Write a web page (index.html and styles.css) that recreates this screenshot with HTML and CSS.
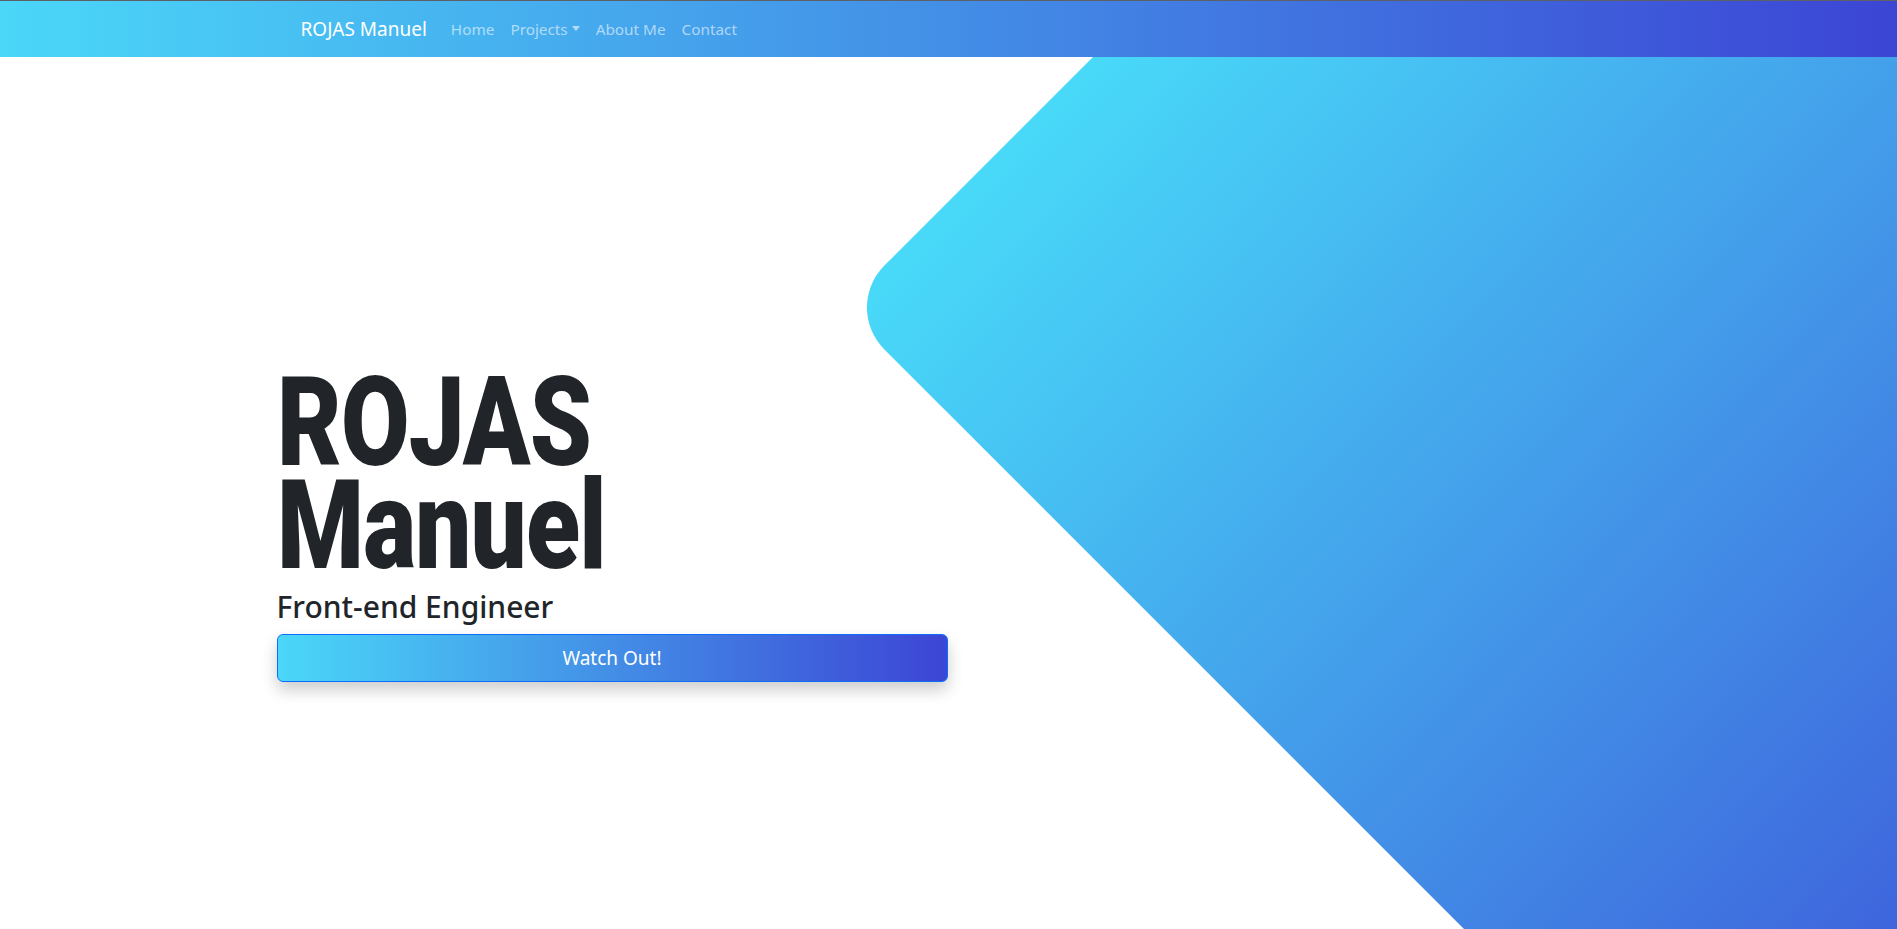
FILE: index.html
```html
<!DOCTYPE html>
<html lang="en">
<head>
<meta charset="utf-8">
<title>ROJAS Manuel</title>
<link rel="stylesheet" href="styles.css">
</head>
<body>
<nav class="navbar">
  <div class="nav-container">
    <a class="brand" href="#">ROJAS Manuel</a>
    <ul class="nav-links">
      <li><a class="nav-link" href="#">Home</a></li>
      <li><a class="nav-link dropdown" href="#">Projects</a></li>
      <li><a class="nav-link" href="#">About Me</a></li>
      <li><a class="nav-link" href="#">Contact</a></li>
    </ul>
  </div>
</nav>
<main class="hero">
  <svg class="hero-shape" viewBox="0 0 1897 872" preserveAspectRatio="none" aria-hidden="true">
    <defs>
      <linearGradient id="shapeGrad" gradientUnits="userSpaceOnUse" x1="868" y1="252" x2="1955" y2="1288">
        <stop offset="0" stop-color="#48d8f8"/>
        <stop offset="1" stop-color="#3c45d5"/>
      </linearGradient>
    </defs>
    <path d="M1093 0 L884.2 208.8 A59 59 0 0 0 884.2 292.2 L1464 872 L1897 872 L1897 0 Z" fill="url(#shapeGrad)"/>
  </svg>
  <div class="hero-inner">
    <div class="hero-content">
      <h1 class="hero-title"><span class="title-line">ROJAS</span><span class="title-line">Manuel</span></h1>
      <h2 class="hero-subtitle">Front-end Engineer</h2>
      <button class="hero-btn" type="button">Watch Out!</button>
    </div>
  </div>
</main>
</body>
</html>
```
FILE: styles.css
```css
* { box-sizing: border-box; }
html, body { margin: 0; padding: 0; }
body {
  font-family: "Noto Sans", "Open Sans", sans-serif;
  color: #212529;
  background: #fff;
  height: 929px;
  overflow: hidden;
}
.navbar {
  border-top: 1px solid #5d6064;
  background: linear-gradient(to right, #4ad7f8, #3c45d5);
  padding: 8px 0;
  height: 57px;
}
.nav-container {
  width: 1320px;
  margin: 0 auto;
  padding: 0 12px;
  display: flex;
  align-items: center;
}
.brand {
  color: #fff;
  text-decoration: none;
  font-size: 19px;
  line-height: 30px;
  padding: 5px 0;
  margin-right: 16px;
}
.nav-links {
  list-style: none;
  margin: 0;
  padding: 0;
  display: flex;
}
.nav-link {
  display: block;
  padding: 8px;
  font-size: 15.3px;
  line-height: 24px;
  color: rgba(255, 255, 255, 0.58);
  text-decoration: none;
}
.dropdown::after {
  content: "";
  display: inline-block;
  margin-left: 4px;
  vertical-align: 4px;
  border-top: 5px solid;
  border-left: 4.5px solid transparent;
  border-right: 4.5px solid transparent;
}
.hero {
  position: relative;
  height: 872px;
  overflow: hidden;
}
.hero-shape {
  position: absolute;
  inset: 0;
  width: 100%;
  height: 100%;
  display: block;
}
.hero-inner {
  position: relative;
  width: 1344px;
  margin: 0 auto;
  padding-top: 314px;
}
.hero-content {
  width: 671px;
}
.hero-title {
  margin: 0 0 11px;
  font-family: Roboto, "Liberation Sans", sans-serif;
  font-weight: 900;
  font-size: 125px;
  line-height: 103px;
  letter-spacing: -1px;
  transform: scaleX(0.795);
  transform-origin: left top;
  color: #212529;
}
.title-line {
  display: block;
  height: 103px;
}
.hero-subtitle {
  margin: 0 0 8px;
  font-weight: 500;
  font-size: 30px;
  line-height: 38px;
  color: #212529;
}
.hero-btn {
  display: block;
  width: 671px;
  height: 48px;
  border: 1px solid #0d6efd;
  border-radius: 6px;
  background: linear-gradient(to right, #4ad7f8, #3c45d5);
  color: #fff;
  font-family: "Noto Sans", "Open Sans", sans-serif;
  font-size: 19px;
  line-height: 30px;
  box-shadow: 0 8px 16px rgba(0, 0, 0, 0.2);
  cursor: pointer;
}
```
